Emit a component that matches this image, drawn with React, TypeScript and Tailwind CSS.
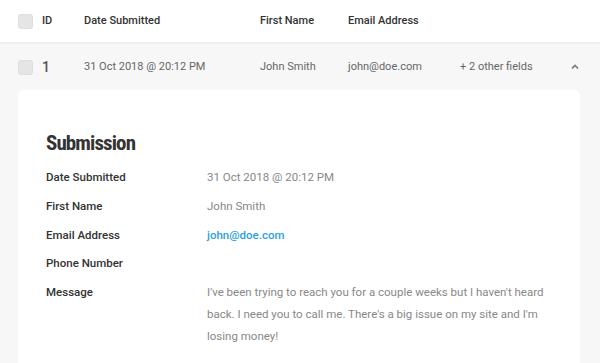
const font = { fontFamily: "Roboto, 'Liberation Sans', sans-serif" };

function Box() {
    return <span className="block w-[15px] h-[15px] rounded-[3px] bg-[#e5e5e5] border border-[#dedede]" />;
}

const fields = [
    { label: "Date Submitted", value: "31 Oct 2018 @ 20:12 PM" },
    { label: "First Name", value: "John Smith" },
    { label: "Email Address", value: "john@doe.com", link: true },
    { label: "Phone Number", value: "" },
    {
        label: "Message",
        value: "I've been trying to reach you for a couple weeks but I haven't heard back. I need you to call me. There's a big issue on my site and I'm losing money!",
    },
];

export default function App() {
    return (
        <div className="w-[600px] h-[363px] overflow-hidden bg-white" style={font}>
            <div className="h-[44px] flex items-center border-b-2 border-[#efefef] text-[11px] text-[#333] font-medium">
                <div className="w-[42px] pl-[18px]">
                    <Box />
                </div>
                <div className="w-[42px]">ID</div>
                <div className="w-[176px]">Date Submitted</div>
                <div className="w-[88px]">First Name</div>
                <div>Email Address</div>
            </div>
            <div className="bg-[#f7f7f7] h-[319px]">
                <div className="h-[46px] flex items-center text-[11px] text-[#666]">
                    <div className="w-[42px] pl-[18px]">
                        <Box />
                    </div>
                    <div className="w-[42px] text-[14px] font-medium text-[#555]">1</div>
                    <div className="w-[176px]">31 Oct 2018 @ 20:12 PM</div>
                    <div className="w-[88px]">John Smith</div>
                    <div className="w-[112px]">john@doe.com</div>
                    <div className="w-[110px]">+ 2 other fields</div>
                    <svg width="10" height="8" viewBox="0 0 10 8">
                        <path d="M2 5.5 L5 2.5 L8 5.5" fill="none" stroke="#777" strokeWidth="1.6" />
                    </svg>
                </div>
                <div className="ml-[18px] w-[562px] h-[300px] bg-white rounded-[5px] pt-[41px] px-[28px]">
                    <h2
                        className="text-[21px] leading-[24px] font-bold text-[#333] tracking-[-0.9px] mb-[11px]"
                        style={{ fontStretch: "condensed" }}
                    >
                        Submission
                    </h2>
                    <div className="flex flex-col gap-[6.75px] text-[11.5px] leading-[22px]">
                        {fields.map((f) => (
                            <div key={f.label} className="flex">
                                <div className="w-[161px] shrink-0 font-medium text-[#333]">{f.label}</div>
                                <div
                                    className={
                                        f.link
                                            ? "text-[#2ba1e0] font-medium"
                                            : "text-[#888] min-h-[22px]"
                                    }
                                >
                                    {f.value}
                                </div>
                            </div>
                        ))}
                    </div>
                </div>
            </div>
        </div>
    );
}
